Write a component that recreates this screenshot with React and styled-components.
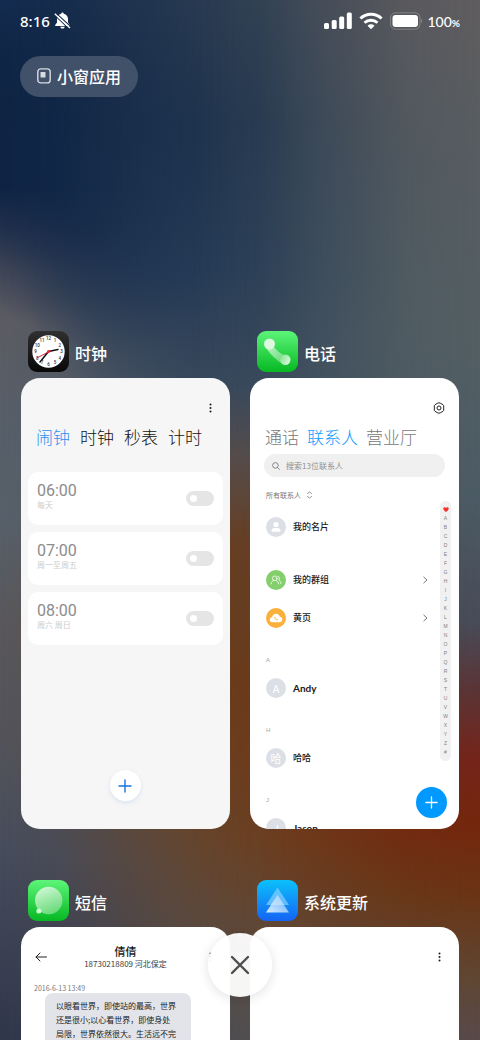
import React from "react";
import styled, { createGlobalStyle } from "styled-components";

const GlobalStyle = createGlobalStyle`
  *, *::before, *::after {
    box-sizing: border-box;
  }

  body {
    margin: 0;
    font-family: "Noto Sans CJK SC", sans-serif;
  }

  button, input, select {
    font-family: inherit;
    border: 0;
    padding: 0;
    margin: 0;
    background: none;
    color: inherit;
  }

  a {
    color: inherit;
    text-decoration: none;
  }

  h1, h2, p, ul, ol {
    margin: 0;
    padding: 0;
    list-style: none;
    font-weight: 400;
  }

  svg {
    display: block;
    flex: none;
  }
`;

const Screen = styled.main`
  position: relative;
  isolation: isolate;
  height: 100vh;
  overflow: hidden;
  color: #ffffff;
`;

/* Three vertical colour runs: centre, then left and right faded over it */
const Wallpaper = styled.div`
  position: absolute;
  inset: 0;
  z-index: -1;
  background: linear-gradient(
    #2b3d52 0%, #21364f 12%, #263c56 26%, #34465b 37%, #574a47 44%,
    #6a3b1a 52%, #6e3c15 66%, #6a4426 81%, #55504f 97%, #505052 100%
  );

  &::before,
  &::after {
    content: "";
    position: absolute;
    inset: 0;
  }

  &::before {
    background:
      radial-gradient(ellipse 38% 20% at 24% 14%, #0f2546 0%, rgba(15, 37, 70, 0.85) 40%, rgba(15, 37, 70, 0) 100%),
      radial-gradient(ellipse 34% 14% at 38% 26%, rgba(32, 54, 84, 0.95) 0%, rgba(32, 54, 84, 0) 100%),
      linear-gradient(
        #142c50 0%, #0d2240 10%, #0e2242 18%, #2c3650 22%, #4a4d5a 26%, #5c5c63 31%,
        #565f69 42%, #56606a 50%, #58575b 60%, #52535a 72%, #454c5c 82%, #30364a 100%
      );
    mask-image: linear-gradient(
      to right, #000 0%, rgba(0, 0, 0, 0.88) 12%, rgba(0, 0, 0, 0.5) 26%,
      rgba(0, 0, 0, 0.16) 40%, rgba(0, 0, 0, 0.04) 50%, transparent 60%
    );
  }

  &::after {
    background: linear-gradient(
      #605d5f 0%, #575d61 15%, #545f63 32%, #4b5b65 48%, #474b58 60%,
      #593538 66%, #74241a 73%, #74260c 79%, #6a3414 86%, #5f4632 94%, #58494a 100%
    );
    mask-image: linear-gradient(
      to left, #000 0%, rgba(0, 0, 0, 0.88) 15%, rgba(0, 0, 0, 0.5) 33%,
      rgba(0, 0, 0, 0.15) 46%, transparent 60%
    );
  }
`;

const StatusBar = styled.header`
  display: flex;
  justify-content: space-between;
  align-items: center;
  height: 42px;
  padding: 0 20px;
`;

const StatusGroup = styled.div`
  display: flex;
  align-items: center;
  gap: ${(props) => props.$gap}px;
`;

const Clock = styled.time`
  font-family: "Noto Sans", sans-serif;
  font-size: 15px;
  font-weight: 500;
`;

const Percent = styled.span`
  font-family: Lato, sans-serif;
  font-size: 14px;
  font-weight: 500;

  & small {
    font-size: 10px;
    font-weight: 700;
  }
`;

const SmallWindowButton = styled.button`
  display: flex;
  align-items: center;
  gap: 6px;
  height: 41px;
  margin: 14px 20px 0;
  padding: 0 17px 1px;
  border-radius: 21px;
  background: #42516a;
  font-size: 16px;
  font-weight: 500;
  line-height: 24px;
`;

const Grid = styled.div`
  display: grid;
  grid-template-columns: 1fr 1fr;
  column-gap: 20px;
  row-gap: 51px;
  margin-top: 234px;
  padding: 0 21px;
`;

const AppHeader = styled.div`
  display: flex;
  align-items: center;
  gap: 6px;
  height: 41px;
  margin: 0 7px 6px;
`;

const AppName = styled.h2`
  padding-top: 3px;
  font-size: 16px;
  font-weight: 500;
  line-height: 24px;
`;

const Card = styled.article`
  position: relative;
  aspect-ratio: 209 / 451;
  overflow: hidden;
  border-radius: 19px;
  background: ${(props) => props.$background || "#ffffff"};
  color: #1a1a1a;
`;

const MenuRow = styled.div`
  display: flex;
  justify-content: flex-end;
  padding: 22px 12px 0;
`;

const IconButton = styled.button`
  display: grid;
  place-items: center;
  width: 16px;
  height: 16px;
`;

const Tabs = styled.nav`
  display: flex;
  gap: ${(props) => props.$gap}px;
  padding: 11px 15px 0;
`;

const Tab = styled.button`
  color: ${(props) => props.$color};
  font-size: 17px;
  font-weight: 300;
  line-height: 20px;
  white-space: nowrap;
`;

const AlarmList = styled.ul`
  display: grid;
  gap: 7px;
  padding: 25px 7px 0;
`;

const Alarm = styled.li`
  display: flex;
  align-items: center;
  justify-content: space-between;
  height: 53px;
  padding: 0 9px;
  border-radius: 10px;
  background: #ffffff;
`;

const AlarmLabel = styled.label`
  display: grid;
  padding-bottom: 6px;
`;

const AlarmTime = styled.span`
  color: #8c8c8c;
  font-family: Roboto, sans-serif;
  font-size: 16px;
  line-height: 18px;
`;

const AlarmDays = styled.span`
  color: #cccccc;
  font-size: 8px;
  line-height: 10px;
`;

const Toggle = styled.input`
  appearance: none;
  width: 28px;
  height: 15px;
  padding: 4px;
  border-radius: 8px;
  background: #e5e5e5;

  &::before {
    content: "";
    display: block;
    width: 7px;
    height: 7px;
    border-radius: 50%;
    background: #ffffff;
  }

  &:checked {
    background: #0d84ff;
  }
`;

const AddAlarm = styled.button`
  position: absolute;
  bottom: 28px;
  left: 50%;
  display: grid;
  place-items: center;
  width: 31px;
  height: 31px;
  margin-left: -16px;
  border-radius: 50%;
  background: #ffffff;
  box-shadow: 0 2px 5px rgba(60, 130, 220, 0.15);
  color: #1673e0;
`;

const AddContact = styled.button`
  position: absolute;
  right: 12px;
  bottom: 11px;
  display: grid;
  place-items: center;
  width: 31px;
  height: 31px;
  border-radius: 50%;
  background: #0099ff;
  color: #ffffff;
`;

const Search = styled.label`
  display: flex;
  align-items: center;
  gap: 6px;
  height: 23px;
  margin: 7px 14px 0;
  padding: 0 8px;
  border-radius: 12px;
  background: #f0f0f0;
  color: #7a7a7a;

  & input {
    flex: 1;
    min-width: 0;
    font-size: 8px;
    line-height: 12px;
    outline: none;
  }

  & input::placeholder {
    color: #8f8f8f;
    opacity: 1;
  }
`;

const Filter = styled.label`
  display: flex;
  align-items: center;
  gap: 6px;
  height: 10px;
  margin: 13px 16px 8px;
  color: #777777;

  & select {
    appearance: none;
    font-size: 7px;
    line-height: 10px;
  }
`;

const Contact = styled.a`
  display: flex;
  align-items: center;
  gap: 7px;
  height: 38px;
  margin-bottom: ${(props) => (props.$spaced ? 15 : 0)}px;
  padding: 0 31px 0 16px;
  line-height: 14px;
`;

const ContactName = styled.span`
  flex: 1;
  font-family: ${(props) => (props.$latin ? "Lato, sans-serif" : "inherit")};
  font-size: ${(props) => (props.$latin ? 10 : 9)}px;
  font-weight: ${(props) => (props.$latin ? 700 : 500)};
`;

const Avatar = styled.span`
  display: grid;
  place-items: center;
  flex: none;
  width: 20px;
  height: 20px;
  border-radius: 50%;
  background: ${(props) => props.$color || "#dcdfe5"};
  color: #ffffff;
  font-size: 11px;
`;

const Letter = styled.h3`
  margin: 0;
  padding: 18px 16px 4px;
  color: #a6a6a6;
  font-family: "Liberation Sans", sans-serif;
  font-size: 6px;
  font-weight: 400;
  line-height: 10px;
`;

const IndexBar = styled.nav`
  position: absolute;
  top: 123px;
  right: 8px;
  display: grid;
  justify-items: center;
  width: 11px;
  padding: 4px 0;
  border-radius: 6px;
  background: #f1f1f1;
  color: #808080;
  font-family: "Liberation Sans", sans-serif;
  font-size: 5px;
  line-height: 9px;

  & a {
    display: grid;
    place-items: center;
    height: 9px;
  }
`;

const MessageBar = styled.div`
  display: grid;
  grid-template-columns: 16px 1fr 16px;
  align-items: center;
  padding: 17px 12px 0;
  text-align: center;
`;

const Sender = styled.p`
  font-size: 11px;
  font-weight: 500;
  line-height: 14px;
`;

const SenderNumber = styled.p`
  color: #404040;
  font-size: 8px;
  line-height: 12px;
`;

const SentAt = styled.time`
  display: block;
  padding: 13px 13px 0;
  color: #777777;
  font-size: 7px;
  line-height: 10px;
`;

const Bubble = styled.p`
  width: fit-content;
  margin-left: 24px;
  padding: 6px 15px 6px 11px;
  border-radius: 8px;
  background: #e3e4e9;
  font-size: 8px;
  line-height: 14px;
  white-space: nowrap;
`;

const CloseButton = styled.button`
  position: absolute;
  bottom: 43px;
  left: 50%;
  display: grid;
  place-items: center;
  width: 64px;
  height: 64px;
  margin-left: -32px;
  border-radius: 50%;
  background: rgba(255, 255, 255, 0.95);
  box-shadow: 0 2px 12px rgba(0, 0, 0, 0.12);
  color: #4d4d4d;
`;

const BellOff = () => (
  <svg width="17" height="18" viewBox="0 0 17 18" aria-hidden="true">
    <path
      fill="#fff"
      d="M8.500.5a1.300 1.300 0 0 1 1.300 1.200C12.500 2.400 14 4.300 14 7v3.600l1.800 2.300v1H1.200v-1L3 10.600V7c0-2.700 1.500-4.600 4.200-5.300A1.300 1.300 0 0 1 8.500.5ZM6.300 14.700h4.400c-.2 1.200-1 1.900-2.200 1.900s-2-.7-2.200-1.900Z"
    />
    <path d="M1.700.8 17 14.800M0 2.600 15 16.800" stroke="#14294a" strokeWidth="1.100" />
    <path d="M.8 1.700 16 16" stroke="#fff" strokeWidth="1.400" />
  </svg>
);

const Signal = () => (
  <svg width="28" height="18" viewBox="0 0 28 18" fill="#fff" aria-label="信号">
    <rect x="0" y="11" width="5" height="6" rx="1.500" />
    <rect x="7.700" y="8" width="5" height="9" rx="1.500" />
    <rect x="15.200" y="4.500" width="5" height="12.500" rx="1.500" />
    <rect x="22.800" y="0.500" width="5" height="16.500" rx="1.500" />
  </svg>
);

const Wifi = () => (
  <svg width="24" height="18" viewBox="0 0 24 18" fill="none" stroke="#fff" aria-label="Wi-Fi">
    <path d="M1.400 6.500a15.500 15.500 0 0 1 21.200 0" strokeWidth="3" />
    <path d="M5.500 10.800a9.500 9.500 0 0 1 13 0" strokeWidth="2.800" />
    <path d="M12 17.200 8.500 13.800a5 5 0 0 1 7 0Z" fill="#fff" stroke="none" />
  </svg>
);

const Battery = () => (
  <svg width="33" height="18" viewBox="0 0 33 18" aria-label="电池">
    <rect x="0.500" y="0.800" width="29.500" height="16.400" rx="5" fill="none" stroke="#fff" strokeOpacity="0.250" />
    <rect x="2.500" y="3" width="25.500" height="12" rx="3" fill="#fff" />
    <path d="M31 7c1.600.6 1.600 3.400 0 4Z" fill="#fff" fillOpacity="0.250" />
  </svg>
);

const SmallWindow = () => (
  <svg width="14" height="16" viewBox="0 0 14 16" aria-hidden="true">
    <rect x="0.800" y="0.900" width="12.400" height="14" rx="3" fill="none" stroke="#d7dbe2" strokeWidth="1.400" />
    <rect x="3.500" y="4" width="5" height="5.500" rx="0.600" fill="#d7dbe2" />
  </svg>
);

const ClockIcon = () => (
  <svg width="41" height="41" viewBox="0 0 41 41" aria-hidden="true">
    <defs>
      <linearGradient id="clockBg" x1="0" y1="0" x2="0" y2="1">
        <stop offset="0" stopColor="#303030" />
        <stop offset="1" stopColor="#080808" />
      </linearGradient>
    </defs>
    <rect width="41" height="41" rx="9" fill="url(#clockBg)" />
    <circle cx="20.500" cy="20.500" r="16.200" fill="#fff" />
    <g fontFamily="Roboto, sans-serif" fontSize="4.500" fontWeight="500" fill="#333" textAnchor="middle">
      {[12, 1, 2, 3, 4, 5, 6, 7, 8, 9, 10, 11].map((hour, i) => (
        <text
          key={hour}
          x={20.5 + 13 * Math.sin((i * Math.PI) / 6)}
          y={22.1 - 13 * Math.cos((i * Math.PI) / 6)}
        >
          {hour}
        </text>
      ))}
    </g>
    <path d="M20.500 20.500 30 18.500M20.500 20.500 12 31" stroke="#111" strokeWidth="1.500" strokeLinecap="round" />
    <path d="M23 19.500 9 27" stroke="#e8253a" strokeWidth="1" />
    <circle cx="20.500" cy="20.500" r="1.500" fill="#e8253a" />
  </svg>
);

const PhoneIcon = () => (
  <svg width="41" height="41" viewBox="0 0 41 41" aria-hidden="true">
    <defs>
      <linearGradient id="phoneBg" x1="0" y1="0" x2="0" y2="1">
        <stop offset="0" stopColor="#5df579" />
        <stop offset="1" stopColor="#06b822" />
      </linearGradient>
      <linearGradient id="handset" gradientUnits="userSpaceOnUse" x1="12" y1="12" x2="30" y2="30">
        <stop offset="0" stopColor="#d3f8d9" />
        <stop offset="1" stopColor="#6bdc7c" />
      </linearGradient>
      <linearGradient id="earpiece" x1="0" y1="0" x2="1" y2="0.600">
        <stop offset="0" stopColor="#7ce08b" />
        <stop offset="1" stopColor="#d5f7da" />
      </linearGradient>
    </defs>
    <rect width="41" height="41" rx="9" fill="url(#phoneBg)" />
    <path d="M9.500 17.500Q16 27 25 32.500L27.500 24.200Q21 21.500 16.500 15.500Z" fill="url(#handset)" fillOpacity="0.850" />
    <circle cx="12.500" cy="13" r="5.500" fill="#dcf9e0" />
    <circle cx="28.300" cy="28.700" r="5.200" fill="url(#earpiece)" />
  </svg>
);

const MessageIcon = () => (
  <svg width="41" height="41" viewBox="0 0 41 41" aria-hidden="true">
    <defs>
      <linearGradient id="smsBg" x1="0" y1="0" x2="0" y2="1">
        <stop offset="0" stopColor="#5df579" />
        <stop offset="1" stopColor="#06b822" />
      </linearGradient>
      <linearGradient id="smsBall" x1="0" y1="0" x2="0.400" y2="1">
        <stop offset="0" stopColor="#d9fbdd" />
        <stop offset="1" stopColor="#6fdc7f" />
      </linearGradient>
    </defs>
    <rect width="41" height="41" rx="9" fill="url(#smsBg)" />
    <circle cx="20.700" cy="20.500" r="13.700" fill="url(#smsBall)" />
    <circle cx="10.900" cy="31" r="2.500" fill="#cff8d5" />
  </svg>
);

const UpdateIcon = () => (
  <svg width="41" height="41" viewBox="0 0 41 41" aria-hidden="true">
    <defs>
      <linearGradient id="updateBg" x1="0" y1="0" x2="0" y2="1">
        <stop offset="0" stopColor="#0cc0fb" />
        <stop offset="1" stopColor="#1464f4" />
      </linearGradient>
      <linearGradient id="updateFront" x1="1" y1="0" x2="0" y2="1">
        <stop offset="0.200" stopColor="#7cc0fc" />
        <stop offset="1" stopColor="#ffffff" />
      </linearGradient>
    </defs>
    <rect width="41" height="41" rx="9" fill="url(#updateBg)" />
    <path d="M20.500 7.500 32 25H9Z" fill="#8fd6ff" fillOpacity="0.650" />
    <path d="M20.500 15 32 32.500H9Z" fill="url(#updateFront)" fillOpacity="0.850" />
    <path d="M20.500 15 27 25H14Z" fill="#c5e4ff" fillOpacity="0.600" />
  </svg>
);

const Dots = () => (
  <svg width="3" height="10" viewBox="0 0 3 10" fill="#1a1a1a" aria-hidden="true">
    <circle cx="1.500" cy="1.500" r="1" />
    <circle cx="1.500" cy="5" r="1" />
    <circle cx="1.500" cy="8.500" r="1" />
  </svg>
);

const Gear = () => (
  <svg width="12" height="12" viewBox="0 0 12 12" fill="none" stroke="#222" strokeWidth="1" strokeLinejoin="round" aria-hidden="true">
    <path d="M4.800 1.100Q6 .5 7.200 1.100L10 2.700Q10.700 3.200 10.700 4V8Q10.700 8.800 10 9.300L7.200 10.900Q6 11.500 4.800 10.900L2 9.300Q1.300 8.800 1.300 8V4Q1.300 3.200 2 2.700Z" />
    <circle cx="6" cy="6" r="2" />
  </svg>
);

const Magnifier = () => (
  <svg width="8" height="8" viewBox="0 0 8 8" fill="none" stroke="currentColor" strokeWidth="0.900" aria-hidden="true">
    <circle cx="3.400" cy="3.400" r="2.800" />
    <path d="M5.500 5.500 7.700 7.700" />
  </svg>
);

const SortArrows = () => (
  <svg width="5" height="8" viewBox="0 0 5 8" fill="none" stroke="#777" strokeWidth="0.800" aria-hidden="true">
    <path d="M.500 3V2.500L2.500 1l2 1.500V3M.500 5v.500L2.500 7l2-1.500V5" />
  </svg>
);

const Chevron = () => (
  <svg width="6" height="8" viewBox="0 0 6 8" fill="none" stroke="#777" strokeWidth="1" aria-hidden="true">
    <path d="M1.500.800 5 4 1.500 7.200" />
  </svg>
);

const Plus = ({ size }) => (
  <svg width={size} height={size} viewBox="0 0 14 14" stroke="currentColor" strokeWidth="1.400" strokeLinecap="round" aria-hidden="true">
    <path d="M7 1v12M1 7h12" />
  </svg>
);

const BackArrow = () => (
  <svg width="12" height="10" viewBox="0 0 12 10" fill="none" stroke="#222" strokeWidth="1" strokeLinecap="round" strokeLinejoin="round" aria-hidden="true">
    <path d="M5 1 1 5l4 4M1 5h10.500" />
  </svg>
);

const Cross = () => (
  <svg width="20" height="20" viewBox="0 0 20 20" stroke="currentColor" strokeWidth="2.400" strokeLinecap="round" aria-hidden="true">
    <path d="M2 2l16 16M18 2 2 18" />
  </svg>
);

const Person = () => (
  <svg width="12" height="12" viewBox="0 0 12 12" fill="#fff" aria-hidden="true">
    <circle cx="6" cy="3.500" r="2.600" />
    <path d="M1.500 9.500C1.500 7.300 3.300 7 6 7s4.500.3 4.500 2.500c0 1-.5 1.300-1.300 1.300H2.800c-.8 0-1.300-.3-1.300-1.300Z" />
  </svg>
);

const People = () => (
  <svg width="12" height="10" viewBox="0 0 12 10" fill="none" stroke="#fff" strokeWidth="0.800" strokeLinecap="round" aria-hidden="true">
    <circle cx="4.800" cy="3.300" r="2.300" />
    <path d="M1 9c.2-2 1.300-3 2.400-3.500M6.200 5.500C7.400 6 8.300 7.200 8.500 9M7.800 1.200c1.800.2 2.300 2.500.9 3.900C10 5.800 10.800 7 11 8.700" />
  </svg>
);

const YellowPage = () => (
  <svg width="14" height="10" viewBox="0 0 14 10" aria-hidden="true">
    <path d="M3.500 9.200C1.800 9.200.8 8 .8 6.700c0-1.400 1-2.400 2.300-2.500C3.500 2 5 .8 7 .8s3.300 1.200 3.800 3c1.500.1 2.500 1.200 2.500 2.700 0 1.600-1.100 2.700-2.800 2.700Z" fill="#fff" />
    <path d="M5.800 4.200c0 1.600 1.200 2.700 2.700 2.700" fill="none" stroke="#fbb03b" strokeWidth="1" strokeLinecap="round" />
  </svg>
);

const Heart = () => (
  <svg width="6" height="5" viewBox="0 0 6 5" aria-hidden="true">
    <path d="M3 5C1 3.500.3 2.700.3 1.600.3.200 2.200-.3 3 .900 3.800-.3 5.700.2 5.700 1.600 5.700 2.700 5 3.500 3 5Z" fill="#f5302c" />
  </svg>
);

const alarms = [
  { time: "06:00", days: "每天" },
  { time: "07:00", days: "周一至周五" },
  { time: "08:00", days: "周六 周日" },
];

const letters = "ABCDEFGHIJKLMNOPQRSTUVWXYZ#".split("");

const AppTile = ({ icon, name, children }) => (
  <section>
    <AppHeader>
      {icon}
      <AppName>{name}</AppName>
    </AppHeader>
    {children}
  </section>
);

const ClockCard = () => (
  <Card $background="#f6f6f6">
    <MenuRow>
      <IconButton aria-label="更多"><Dots /></IconButton>
    </MenuRow>
    <Tabs $gap={10}>
      <Tab $color="#2b8fee">闹钟</Tab>
      <Tab $color="#111111">时钟</Tab>
      <Tab $color="#111111">秒表</Tab>
      <Tab $color="#111111">计时</Tab>
    </Tabs>
    <AlarmList>
      {alarms.map((alarm, i) => (
        <Alarm key={alarm.time}>
          <AlarmLabel htmlFor={`alarm-${i}`}>
            <AlarmTime>{alarm.time}</AlarmTime>
            <AlarmDays>{alarm.days}</AlarmDays>
          </AlarmLabel>
          <Toggle type="checkbox" id={`alarm-${i}`} />
        </Alarm>
      ))}
    </AlarmList>
    <AddAlarm aria-label="添加闹钟"><Plus size={14} /></AddAlarm>
  </Card>
);

const PhoneCard = () => (
  <Card>
    <MenuRow>
      <IconButton aria-label="设置"><Gear /></IconButton>
    </MenuRow>
    <Tabs $gap={8}>
      <Tab $color="#777777">通话</Tab>
      <Tab $color="#0d99ff">联系人</Tab>
      <Tab $color="#777777">营业厅</Tab>
    </Tabs>
    <Search>
      <Magnifier />
      <input type="search" placeholder="搜索13位联系人" aria-label="搜索联系人" />
    </Search>
    <Filter>
      <select aria-label="联系人分组">
        <option>所有联系人</option>
      </select>
      <SortArrows />
    </Filter>
    <Contact href="#me" $spaced>
      <Avatar><Person /></Avatar>
      <ContactName>我的名片</ContactName>
    </Contact>
    <Contact href="#groups">
      <Avatar $color="#83cf6b"><People /></Avatar>
      <ContactName>我的群组</ContactName>
      <Chevron />
    </Contact>
    <Contact href="#yellow">
      <Avatar $color="#fbb03b"><YellowPage /></Avatar>
      <ContactName>黄页</ContactName>
      <Chevron />
    </Contact>
    <Letter>A</Letter>
    <Contact href="#andy">
      <Avatar>A</Avatar>
      <ContactName $latin>Andy</ContactName>
    </Contact>
    <Letter>H</Letter>
    <Contact href="#haha">
      <Avatar>哈</Avatar>
      <ContactName>哈哈</ContactName>
    </Contact>
    <Letter>J</Letter>
    <Contact href="#jason">
      <Avatar>J</Avatar>
      <ContactName $latin>Jason</ContactName>
    </Contact>
    <IndexBar aria-label="字母索引">
      <a href="#favorites" aria-label="收藏"><Heart /></a>
      {letters.map((letter) => (
        <a key={letter} href={`#${letter}`}>{letter}</a>
      ))}
    </IndexBar>
    <AddContact aria-label="新建联系人"><Plus size={13} /></AddContact>
  </Card>
);

const MessageCard = () => (
  <Card>
    <MessageBar>
      <IconButton aria-label="返回"><BackArrow /></IconButton>
      <div>
        <Sender>倩倩</Sender>
        <SenderNumber>18730218809 河北保定</SenderNumber>
      </div>
      <IconButton aria-label="更多"><Dots /></IconButton>
    </MessageBar>
    <SentAt>2016-6-13 13:49</SentAt>
    <Bubble>
      以眼看世界，即使站的最高，世界
      <br />
      还是很小;以心看世界，即使身处
      <br />
      局限，世界依然很大。生活远不完
    </Bubble>
  </Card>
);

const UpdateCard = () => (
  <Card>
    <MenuRow>
      <IconButton aria-label="更多"><Dots /></IconButton>
    </MenuRow>
  </Card>
);

function App() {
  return (
    <Screen lang="zh-CN">
      <GlobalStyle />
      <Wallpaper />
      <StatusBar>
        <StatusGroup $gap={4}>
          <Clock>8:16</Clock>
          <BellOff />
        </StatusGroup>
        <StatusGroup $gap={4}>
          <StatusGroup $gap={7}>
            <Signal />
            <Wifi />
            <Battery />
          </StatusGroup>
          <Percent>100<small>%</small></Percent>
        </StatusGroup>
      </StatusBar>
      <SmallWindowButton>
        <SmallWindow />
        小窗应用
      </SmallWindowButton>
      <Grid>
        <AppTile icon={<ClockIcon />} name="时钟"><ClockCard /></AppTile>
        <AppTile icon={<PhoneIcon />} name="电话"><PhoneCard /></AppTile>
        <AppTile icon={<MessageIcon />} name="短信"><MessageCard /></AppTile>
        <AppTile icon={<UpdateIcon />} name="系统更新"><UpdateCard /></AppTile>
      </Grid>
      <CloseButton aria-label="关闭全部"><Cross /></CloseButton>
    </Screen>
  );
}

export default App;
